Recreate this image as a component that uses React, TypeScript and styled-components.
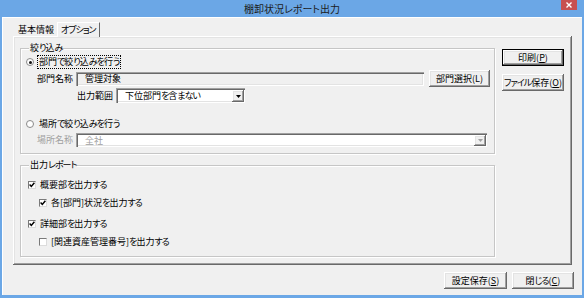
import React from "react";
import styled, { createGlobalStyle } from "styled-components";

const Global = createGlobalStyle`
  html, body { margin: 0; padding: 0; background: #6ba7e6; }
  body {
    font-family: "Noto Sans CJK JP", "Noto Sans", sans-serif;
    font-size: 9px;
    line-height: 12px;
    color: #000;
    font-feature-settings: "palt";
  }
  * { box-sizing: border-box; }
`;

const raised = `
  box-shadow: inset -1px -1px 0 #696969, inset 1px 1px 0 #ffffff,
    inset -2px -2px 0 #a0a0a0, inset 2px 2px 0 #e3e3e3;
`;
const sunken = `
  box-shadow: inset 1px 1px 0 #a0a0a0, inset 2px 2px 0 #696969,
    inset -1px -1px 0 #ffffff, inset -2px -2px 0 #e3e3e3;
`;

const Kana = styled.span`
  letter-spacing: -1px;
`;

const JP = ({ children }: { children: string }) => {
  const parts = children.split(/([\u3040-\u30ff]+)/);
  return (
    <>
      {parts.map((s, i) =>
        /^[\u3040-\u30ff]+$/.test(s) ? <Kana key={i}>{s}</Kana> : s
      )}
    </>
  );
};

const Window = styled.div`
  width: 584px;
  height: 298px;
  background: #6ba7e6;
  display: flex;
  flex-direction: column;
`;

const TitleBar = styled.div`
  height: 17px;
  display: grid;
  grid-template-columns: 1fr auto 1fr;
  align-items: start;
`;

const Title = styled.div`
  grid-column: 2;
  font-size: 10px;
  line-height: 12px;
  padding-top: 3px;
  color: #1b1b1b;
`;

const CloseButton = styled.div`
  grid-column: 3;
  justify-self: end;
  margin-right: 7px;
  width: 16px;
  height: 10px;
  background: #c75050;
  display: flex;
  align-items: center;
  justify-content: center;
`;

const Client = styled.div`
  margin: 0 2px 3px 2px;
  flex: 1;
  background: #f0f0f0;
  box-shadow: inset 1px 1px 0 #ffffff;
  display: flex;
  flex-direction: column;
  padding: 5px 9px 0 11px;
`;

const TabControl = styled.div`
  display: flex;
  flex-direction: column;
  margin-right: 1px;
`;

const TabStrip = styled.div`
  display: flex;
  align-items: flex-end;
  height: 14px;
  padding-left: 2px;
`;

const Tab = styled.div<{ $active?: boolean }>`
  position: relative;
  background: #f0f0f0;
  white-space: nowrap;
  ${(p) =>
    p.$active
      ? `
    height: 15px;
    margin-bottom: -1px;
    z-index: 1;
    padding: 1px 3px 0 3px;
    border-left: 1px solid #ffffff;
    border-top: 1px solid #ffffff;
    border-right: 1px solid #696969;
  `
      : `
    height: 12px;
    padding: 0 3px;
  `}
`;

const TabPanel = styled.div`
  height: 229px;
  display: flex;
  padding: 0 8px 0 7px;
  ${raised}
`;

const MainColumn = styled.div`
  flex: 1;
  display: flex;
  flex-direction: column;
  min-width: 0;
`;

const SideColumn = styled.div`
  width: 62px;
  margin-left: 7px;
  padding-top: 13px;
  display: flex;
  flex-direction: column;
  gap: 8px;
`;

const Group = styled.section<{ $mt: number; $pb: number }>`
  margin-top: ${(p) => p.$mt}px;
  padding: 0 4px ${(p) => p.$pb}px 5px;
  border: 1px solid #c6c6c6;
  box-shadow: 1px 1px 0 #ffffff, inset 1px 1px 0 #ffffff;
  display: flex;
  flex-direction: column;
`;

const GroupTitle = styled.div`
  align-self: flex-start;
  margin: -7px 0 0 3px;
  padding: 0 1px;
  height: 12px;
  line-height: 12px;
  background: #f0f0f0;
  white-space: nowrap;
`;

const Row = styled.div<{ $h?: number; $mt?: number; $indent?: number }>`
  display: flex;
  align-items: center;
  height: ${(p) => p.$h ?? 14}px;
  margin-top: ${(p) => p.$mt ?? 0}px;
  padding-left: ${(p) => p.$indent ?? 0}px;
  white-space: nowrap;
`;

const Radio = styled.span<{ $checked?: boolean }>`
  width: 8px;
  height: 8px;
  flex: none;
  border-radius: 50%;
  border: 1px solid #8a8a8a;
  background: #ffffff;
  margin-right: 3px;
  display: flex;
  align-items: center;
  justify-content: center;
  &::after {
    content: "";
    width: 3px;
    height: 3px;
    border-radius: 50%;
    background: ${(p) => (p.$checked ? "#111" : "transparent")};
  }
`;

const RadioLabel = styled.span<{ $focused?: boolean }>`
  padding: 0 1px;
  line-height: 12px;
  border: 1px dotted ${(p) => (p.$focused ? "#000" : "transparent")};
`;

const FieldLabel = styled.span<{ $disabled?: boolean }>`
  width: 39px;
  flex: none;
  color: ${(p) => (p.$disabled ? "#a0a0a0" : "#000")};
`;

const ReadOnlyBox = styled.div`
  flex: 1;
  height: 14px;
  padding-left: 9px;
  display: flex;
  align-items: center;
  background: #f0f0f0;
  ${sunken}
`;

const Combo = styled.div<{ $width?: number; $h: number; $disabled?: boolean }>`
  ${(p) => (p.$width ? `width: ${p.$width}px;` : "flex: 1; margin-right: 3px;")}
  height: ${(p) => p.$h}px;
  display: flex;
  align-items: stretch;
  background: #ffffff;
  padding: 2px 1px 1px 2px;
  color: ${(p) => (p.$disabled ? "#a0a0a0" : "#000")};
  ${sunken}
`;

const ComboText = styled.span`
  flex: 1;
  padding-left: 7px;
  display: flex;
  align-items: center;
`;

const DropButton = styled.span`
  width: 12px;
  display: flex;
  align-items: center;
  justify-content: center;
  background: #f0f0f0;
  ${raised}
`;

const Button = styled.button<{ $w: number; $default?: boolean }>`
  width: ${(p) => p.$w}px;
  height: 17px;
  padding: 0;
  font: inherit;
  font-feature-settings: "palt";
  color: #000;
  background: #f0f0f0;
  border: ${(p) => (p.$default ? "1px solid #000" : "none")};
  ${raised}
  white-space: nowrap;
`;

const Spacer = styled.span`
  width: 5px;
  flex: none;
`;

const CheckBox = styled.span`
  width: 8px;
  height: 8px;
  margin-right: 4px;
  flex: none;
  border: 1px solid;
  border-color: #7a7a7a #dcdcdc #dcdcdc #7a7a7a;
  background: #ffffff;
  display: flex;
  align-items: center;
  justify-content: center;
`;

const Footer = styled.div`
  display: flex;
  justify-content: flex-end;
  gap: 5px;
  margin-top: 7px;
  margin-right: -1px;
`;

const Arrow = ({ color = "#000" }: { color?: string }) => (
  <svg width="5" height="3" viewBox="0 0 5 3">
    <path d="M0 0 H5 L2.5 3 Z" fill={color} />
  </svg>
);

const Check = ({ checked }: { checked?: boolean }) => (
  <CheckBox>
    {checked && (
      <svg width="6" height="6" viewBox="0 0 6 6">
        <path d="M0.6 2.6 L2.3 4.4 L5.4 0.8" stroke="#000" strokeWidth="1.5" fill="none" />
      </svg>
    )}
  </CheckBox>
);

export default function App() {
  return (
    <>
      <Global />
      <Window>
        <TitleBar>
          <Title>棚卸状況レポート出力</Title>
          <CloseButton>
            <svg width="6" height="6" viewBox="0 0 6 6">
              <path d="M0.5 0.5 L5.5 5.5 M5.5 0.5 L0.5 5.5" stroke="#fff" strokeWidth="1.4" />
            </svg>
          </CloseButton>
        </TitleBar>
        <Client>
          <TabControl>
            <TabStrip>
              <Tab>基本情報</Tab>
              <Tab $active>
                <JP>オプション</JP>
              </Tab>
            </TabStrip>
            <TabPanel>
              <MainColumn>
                <Group $mt={12} $pb={6}>
                  <GroupTitle>
                    <JP>絞り込み</JP>
                  </GroupTitle>
                  <Row $mt={1}>
                    <Radio $checked />
                    <RadioLabel $focused>
                      <JP>部門で絞り込みを行う</JP>
                    </RadioLabel>
                  </Row>
                  <Row $h={17} $mt={1} $indent={11}>
                    <FieldLabel>部門名称</FieldLabel>
                    <ReadOnlyBox>管理対象</ReadOnlyBox>
                    <Spacer />
                    <Button $w={61}>部門選択(L)</Button>
                  </Row>
                  <Row $h={15} $mt={1} $indent={51}>
                    <FieldLabel>出力範囲</FieldLabel>
                    <Combo $width={129} $h={15}>
                      <ComboText>
                        <span>
                          <JP>下位部門を含まない</JP>
                        </span>
                      </ComboText>
                      <DropButton>
                        <Arrow />
                      </DropButton>
                    </Combo>
                  </Row>
                  <Row $mt={14}>
                    <Radio />
                    <RadioLabel>
                      <JP>場所で絞り込みを行う</JP>
                    </RadioLabel>
                  </Row>
                  <Row $mt={2} $indent={11}>
                    <FieldLabel $disabled>場所名称</FieldLabel>
                    <Combo $h={14} $disabled>
                      <ComboText>全社</ComboText>
                      <DropButton>
                        <Arrow color="#a0a0a0" />
                      </DropButton>
                    </Combo>
                  </Row>
                </Group>
                <Group $mt={11} $pb={7}>
                  <GroupTitle>
                    <JP>出力レポート</JP>
                  </GroupTitle>
                  <Row $mt={7} $indent={2}>
                    <Check checked />
                    <JP>概要部を出力する</JP>
                  </Row>
                  <Row $mt={4} $indent={13}>
                    <Check checked />
                    <JP>各[部門]状況を出力する</JP>
                  </Row>
                  <Row $mt={7} $indent={2}>
                    <Check checked />
                    <JP>詳細部を出力する</JP>
                  </Row>
                  <Row $mt={4} $indent={13}>
                    <Check />
                    <JP>[関連資産管理番号]を出力する</JP>
                  </Row>
                </Group>
              </MainColumn>
              <SideColumn>
                <Button $w={62} $default>
                  印刷(<u>P</u>)
                </Button>
                <Button $w={62}>
                  <JP>ファイル保存</JP>(<u>O</u>)
                </Button>
              </SideColumn>
            </TabPanel>
          </TabControl>
          <Footer>
            <Button $w={63}>
              設定保存(<u>S</u>)
            </Button>
            <Button $w={62}>
              <JP>閉じる</JP>(<u>C</u>)
            </Button>
          </Footer>
        </Client>
      </Window>
    </>
  );
}
